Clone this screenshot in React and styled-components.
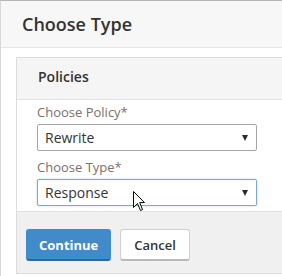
import React from 'react';
import styled, { createGlobalStyle } from 'styled-components';

const GlobalStyle = createGlobalStyle`
  html, body {
    margin: 0;
    padding: 0;
    background: #ffffff;
    font-family: 'Open Sans', 'Liberation Sans', sans-serif;
  }
`;

const Page = styled.div`
  min-height: 276px;
  box-sizing: border-box;
  border-top: 1px solid #b4b4b4;
  border-left: 1px solid #d8d8d8;
  background: #ffffff;
  overflow: hidden;
`;

const Header = styled.div`
  height: 46px;
  display: flex;
  align-items: center;
  padding-left: 21px;
  background: #f7f7f7;
  border-bottom: 1px solid #e6e6e6;
`;

const Title = styled.h1`
  margin: 0;
  font-size: 18px;
  font-weight: 600;
  color: #333333;
`;

const Content = styled.div`
  padding: 9px 0 0 15px;
`;

const Panel = styled.section`
  border: 1px solid #dcdcdc;
  border-right: none;
`;

const PanelHeader = styled.div`
  height: 42px;
  box-sizing: border-box;
  padding: 9px 0 0 21px;
  background: #f5f5f5;
  border-bottom: 1px solid #e2e2e2;
`;

const PanelTitle = styled.h2`
  margin: 0;
  font-size: 14px;
  line-height: 19px;
  font-weight: 600;
  color: #333333;
`;

const PanelBody = styled.div`
  padding: 3px 20px 5px;
  background: #ffffff;
  border-bottom: 1px solid #e2e2e2;
`;

const Field = styled.div`
  & + & {
    margin-top: 7px;
  }
`;

const Label = styled.label`
  display: block;
  font-size: 13px;
  line-height: 18px;
  color: #7a706a;
  margin-bottom: 3px;
`;

const Select = styled.div`
  position: relative;
  width: 220px;
  height: 27px;
  box-sizing: border-box;
  display: flex;
  align-items: center;
  justify-content: space-between;
  padding: 0 8px 0 7px;
  border: 1px solid ${(p) => (p.$focused ? '#7ba7e3' : '#a6a6a6')};
  border-radius: 2px;
  box-shadow: ${(p) => (p.$focused ? '0 0 2px rgba(90, 140, 220, 0.45)' : 'none')};
  background: #ffffff;
  font-size: 14px;
  color: #333333;
`;

const Caret = styled.span`
  width: 0;
  height: 0;
  border-left: 3.5px solid transparent;
  border-right: 3.5px solid transparent;
  border-top: 6px solid #2b2b2b;
`;

const Cursor = styled.svg`
  position: absolute;
  left: 95px;
  top: 11px;
  pointer-events: none;
`;

const Footer = styled.div`
  display: flex;
  gap: 9px;
  padding: 17px 0 12px 9px;
  background: #f0f0f0;
`;

const Button = styled.button`
  height: 32px;
  box-sizing: border-box;
  padding: 0 ${(p) => (p.$primary ? '12px' : '13px')};
  border-radius: 3px;
  font-family: 'Open Sans', 'Liberation Sans', sans-serif;
  font-size: 13px;
  font-weight: ${(p) => (p.$primary ? 700 : 600)};
  color: ${(p) => (p.$primary ? '#ffffff' : '#333333')};
  background: ${(p) => (p.$primary ? '#428bca' : '#ffffff')};
  border: 1px solid ${(p) => (p.$primary ? '#428bca' : '#cfcfcf')};
  border-bottom: 2px solid ${(p) => (p.$primary ? '#2568ad' : '#b9b9b9')};
  cursor: pointer;
`;

const ArrowCursor = () => (
  <Cursor width="13" height="21" viewBox="0 0 13 21">
    <path
      d="M0.5 0.5 L0.5 16.5 L4.5 12.5 L7.5 19.5 L9.5 18.5 L6.7 11.6 L11.5 11.6 Z"
      fill="#ffffff"
      stroke="#000000"
      strokeWidth="1"
      strokeLinejoin="round"
    />
  </Cursor>
);

const App = () => {
  return (
    <Page>
      <GlobalStyle />
      <Header>
        <Title>Choose Type</Title>
      </Header>
      <Content>
        <Panel>
          <PanelHeader>
            <PanelTitle>Policies</PanelTitle>
          </PanelHeader>
          <PanelBody>
            <Field>
              <Label>Choose Policy*</Label>
              <Select>
                <span>Rewrite</span>
                <Caret />
              </Select>
            </Field>
            <Field>
              <Label>Choose Type*</Label>
              <Select $focused>
                <span>Response</span>
                <Caret />
                <ArrowCursor />
              </Select>
            </Field>
          </PanelBody>
          <Footer>
            <Button $primary>Continue</Button>
            <Button>Cancel</Button>
          </Footer>
        </Panel>
      </Content>
    </Page>
  );
};

export default App;
